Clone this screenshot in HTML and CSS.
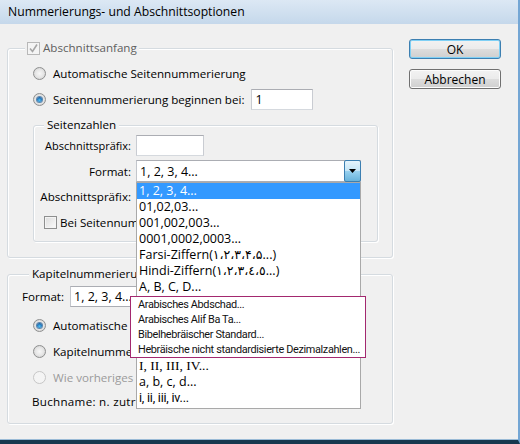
FILE: index.html
```html
<!DOCTYPE html>
<html lang="de">
<head>
<meta charset="utf-8">
<title>Nummerierungs- und Abschnittsoptionen</title>
<link rel="stylesheet" href="styles.css">
</head>
<body>
<div class="dialog">
  <div class="titlebar">Nummerierungs- und Abschnittsoptionen</div>
  <div class="content">
    <div class="main">
      <div class="group g1">
        <div class="legend cb-legend">
          <span class="checkbox disabled"><svg viewBox="0 0 13 13" width="13" height="13"><path d="M3 6.5 L5.5 9.5 L10 2.5" fill="none" stroke="#a6a6a6" stroke-width="1.6"/></svg></span>
          <span class="legend-text muted">Abschnittsanfang</span>
        </div>
        <div class="opt r1"><span class="radio"></span><span>Automatische Seitennummerierung</span></div>
        <div class="opt r2"><span class="radio checked"></span><span>Seitennummerierung beginnen bei:</span><span class="field start">1</span></div>
        <div class="group inner">
          <div class="legend inner-legend">Seitenzahlen</div>
          <div class="form">
            <span class="lbl small">Abschnittspräfix:</span>
            <span class="field prefix"></span>
            <span class="lbl">Format:</span>
            <div class="select fmt">
              <span class="sel-text">1, 2, 3, 4...</span>
              <span class="arrow"><svg viewBox="0 0 7 4" width="7" height="4"><polygon points="0,0 7,0 3.5,4" fill="#000"/></svg></span>
              <div class="list">
                <div class="item sel">1, 2, 3, 4...</div>
                <div class="item">01,02,03...</div>
                <div class="item">001,002,003...</div>
                <div class="item">0001,0002,0003...</div>
                <div class="item">Farsi-Ziffern(<bdo dir="ltr">١،٢،٣،۴،۵</bdo>...)</div>
                <div class="item">Hindi-Ziffern(<bdo dir="ltr">١،٢،٣،٤،٥</bdo>...)</div>
                <div class="item">A, B, C, D...</div>
                <div class="special">
                  <div class="sitem">Arabisches Abdschad...</div>
                  <div class="sitem">Arabisches Alif Ba Ta...</div>
                  <div class="sitem">Bibelhebräischer Standard...</div>
                  <div class="sitem">Hebräische nicht standardisierte Dezimalzahlen...</div>
                </div>
                <div class="item serif">I, II, III, IV...</div>
                <div class="item">a, b, c, d...</div>
                <div class="item narrow">i, ii, iii, iv...</div>
              </div>
            </div>
            <span class="lbl">Abschnittspräfix:</span>
            <span class="field prefix"></span>
          </div>
          <div class="check-row"><span class="checkbox"></span><span>Bei Seitennummerierung Präfix einschließen</span></div>
        </div>
      </div>
      <div class="group g2">
        <div class="legend chap-legend">Kapitelnummerierung</div>
        <div class="fmt-row"><span class="lbl2">Format:</span><div class="select chap"><span class="sel-text">1, 2, 3, 4...</span></div></div>
        <div class="opt c1"><span class="radio checked"></span><span>Automatische Kapitelnummerierung</span></div>
        <div class="opt c2"><span class="radio"></span><span>Kapitelnummer beginnen bei:</span></div>
        <div class="opt c3 disabled-text"><span class="radio disabled"></span><span>Wie vorheriges Dokument im Buch</span></div>
        <div class="book">Buchname: n. zutr.</div>
      </div>
    </div>
    <div class="buttons">
      <button class="btn default">OK</button>
      <button class="btn">Abbrechen</button>
    </div>
  </div>
</div>
</body>
</html>
```
FILE: styles.css
```css
* { box-sizing: border-box; }
html, body { margin: 0; padding: 0; }
body {
  width: 520px;
  height: 444px;
  overflow: hidden;
  background: #f0f0f0;
  font-family: "Open Sans", "Noto Sans", "DejaVu Sans", sans-serif;
  font-size: 11.6px;
  color: #000;
}
.dialog {
  width: 520px;
  height: 444px;
  background: #f0f0f0;
  border-right: 2px solid #74a6d4;
  border-bottom: 4px solid #17384f;
  box-shadow: inset 0 -1px 0 #9bbbd6;
  display: flex;
  flex-direction: column;
}
.titlebar {
  height: 24px;
  flex: none;
  padding-left: 8px;
  line-height: 23px;
  font-size: 12.2px;
  background: linear-gradient(#dce8f4, #c5d8eb);
  white-space: nowrap;
}
.content {
  display: flex;
  padding: 15px 0 0 7px;
}
.main { width: 386px; flex: none; }

.group {
  border: 1px solid #d5dbe0;
  border-radius: 3px;
  box-shadow: inset 1px 1px 0 #fff, 1px 1px 0 #fff;
}
.legend {
  width: max-content;
  height: 16px;
  line-height: 16px;
  background: #f0f0f0;
  white-space: nowrap;
}
.g1 { margin-top: 9px; padding-bottom: 15px; }
.cb-legend {
  display: flex;
  align-items: center;
  gap: 3px;
  margin: -9px 0 0 17px;
  padding: 0 2px;
}
.muted { color: #5f5f5f; }

.checkbox {
  width: 13px;
  height: 13px;
  flex: none;
  border: 1px solid #8e8f8f;
  background: linear-gradient(135deg, #dcdcdc, #fbfbfb);
  box-shadow: inset 0 0 0 1px #f4f4f4;
  display: inline-flex;
  align-items: center;
  justify-content: center;
  position: relative;
}
.checkbox svg { position: absolute; left: -1px; top: -1px; }
.checkbox.disabled { border-color: #b8b8b8; background: #f4f4f4; }

.radio {
  width: 13px;
  height: 13px;
  flex: none;
  border-radius: 50%;
  border: 1px solid #8e8f8f;
  background: radial-gradient(circle at 50% 50%, #f7f7f7 0, #e6e6e6 50%, #c9c9c9 100%);
  display: inline-flex;
  align-items: center;
  justify-content: center;
}
.radio.checked::after {
  content: "";
  width: 5px;
  height: 5px;
  border-radius: 50%;
  background: radial-gradient(circle at 50% 65%, #52c6f5 0, #1e6db6 60%, #173c63 100%);
  box-shadow: 0 0 0 1px #5d87ad;
}
.radio.disabled { border-color: #c6c6c6; background: #f4f4f4; }

.opt {
  display: flex;
  align-items: center;
  gap: 7px;
  height: 20px;
  padding-left: 25px;
  white-space: nowrap;
}
.r1 { margin-top: 7px; }
.r2 { margin-top: 5px; height: 22px; }

.field {
  display: inline-block;
  height: 21px;
  background: #fff;
  border: 1px solid #abadb3;
  border-left-color: #c9ccd2;
  border-right-color: #c9ccd2;
  border-bottom-color: #d5d9de;
  font-size: 12.5px;
  line-height: 19px;
  padding-left: 3px;
}
.start { width: 62px; margin-left: 0; }
.prefix { width: 68px; }

.inner { margin: 15px 14px 0 25px; padding-bottom: 9px; }
.inner-legend { margin: -9px 0 0 10px; padding: 0 3px; }

.form {
  display: grid;
  grid-template-columns: 97px auto;
  column-gap: 5px;
  row-gap: 4px;
  margin-top: 2px;
  align-items: center;
  justify-items: start;
}
.lbl { justify-self: end; white-space: nowrap; }
.lbl.small { font-size: 11px; }

.select {
  position: relative;
  display: flex;
  align-items: center;
  width: 225px;
  height: 22px;
  background: #fff;
  border: 1px solid #abadb3;
  border-left-color: #c3c6cc;
  border-right-color: #c3c6cc;
  padding-left: 3px;
  font-size: 12.5px;
  white-space: nowrap;
}
.arrow {
  margin: -1px -1px -1px auto;
  align-self: stretch;
  width: 17px;
  border: 1px solid #3c7fb1;
  border-radius: 2px;
  background: linear-gradient(#e5f4fc 0, #c4e5f6 50%, #98d1ef 51%, #68b3db 100%);
  display: flex;
  align-items: center;
  justify-content: center;
}

.list {
  position: absolute;
  top: calc(100% + 1px);
  left: -1px;
  width: 225px;
  background: #fff;
  border: 1px solid #a9a9a9;
  padding-bottom: 2px;
  z-index: 10;
}
.item {
  height: 16px;
  line-height: 16px;
  padding-left: 2px;
  font-size: 12.5px;
  white-space: nowrap;
}
.item.sel { background: #3399ff; color: #fff; }
.item.serif { font-family: "Liberation Serif", serif; font-size: 13.5px; }
.item.narrow { font-family: Roboto, sans-serif; font-size: 12.5px; letter-spacing: -0.2px; }
.special {
  margin: 1px -6px 0 -7px;
  border: 1px solid #a3286f;
  background: #fff;
  padding-left: 7px;
}
.sitem {
  height: 15px;
  line-height: 15px;
  font-family: Roboto, sans-serif;
  font-size: 10.9px;
  letter-spacing: -0.35px;
  color: #111;
  white-space: nowrap;
}

.check-row {
  display: flex;
  align-items: center;
  gap: 3px;
  height: 20px;
  margin: 5px 0 0 10px;
  white-space: nowrap;
}

.g2 { margin-top: 16px; padding-bottom: 11px; }
.chap-legend { margin: -9px 0 0 21px; padding: 0 3px; }
.fmt-row {
  display: flex;
  align-items: center;
  gap: 4px;
  margin-top: 4px;
  padding-left: 14px;
}
.lbl2 { width: 44px; white-space: nowrap; }
.select.chap { height: 21px; width: 200px; }
.c1 { margin-top: 8px; }
.c2, .c3 { margin-top: 6px; }
.disabled-text { color: #9b9b9b; }
.book { height: 20px; line-height: 20px; margin-top: 5px; padding-left: 24px; white-space: nowrap; letter-spacing: 0.3px; }

.buttons {
  margin-left: 16px;
  width: 92px;
  flex: none;
  display: flex;
  flex-direction: column;
  gap: 10px;
}
.btn {
  height: 20px;
  width: 92px;
  padding: 0;
  font-family: inherit;
  font-size: 12px;
  color: #000;
  border: 1px solid #707070;
  border-radius: 3px;
  background: linear-gradient(#f2f2f2 0, #ebebeb 50%, #dddddd 51%, #cfcfcf 100%);
  box-shadow: inset 0 0 0 1px #fcfcfc;
}
.btn.default {
  border-color: #3c7fb1;
  box-shadow: inset 0 0 0 1px #7fd0f5;
}
```
